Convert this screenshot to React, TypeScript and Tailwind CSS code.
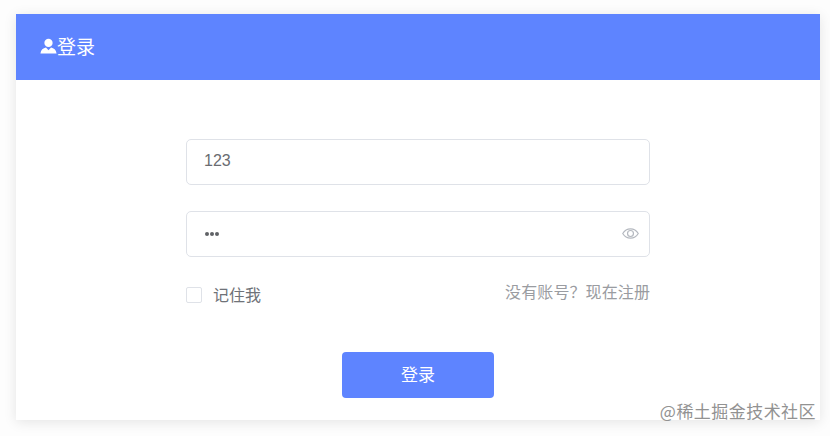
import React from 'react';

const font = { fontFamily: '"Noto Sans CJK SC", "Liberation Sans", sans-serif' };

function UserIcon() {
    return (
        <svg width="17" height="17" viewBox="0 0 16 16" fill="#ffffff">
            <circle cx="8" cy="4.6" r="3.9"/>
            <path d="M0.4 14.6 C0.8 11.2 3 9.6 5.6 9 L8 11.6 L10.4 9 C13 9.6 15.2 11.2 15.6 14.6 Z"/>
        </svg>
    );
}

function EyeIcon() {
    return (
        <svg className="mb-[2px]" width="17" height="17" viewBox="0 0 16 16" fill="none" stroke="#b4b8bf" strokeWidth="1.1">
            <path d="M0.7 8 C2.5 5 5 3.6 8 3.6 C11 3.6 13.5 5 15.3 8 C13.5 11 11 12.4 8 12.4 C5 12.4 2.5 11 0.7 8 Z"/>
            <circle cx="8" cy="8" r="2.8"/>
        </svg>
    );
}

export default function App() {
    return (
        <div className="w-[830px] h-[436px] bg-[#fdfdfd] pt-[14px] pl-4 relative overflow-hidden" style={font}>
            <div className="w-[804px] h-[406px] bg-white shadow-[0_2px_12px_rgba(0,0,0,0.1)]">
                <div className="h-[66px] bg-[#5e84ff] flex items-center pl-6 pb-[2px] text-white text-[19px]">
                    <UserIcon/>
                    <span>登录</span>
                </div>
                <div className="w-[464px] ml-[170px] pt-[59px]">
                    <div className="h-[46px] border border-[#dfe2e8] rounded-[5px] flex items-center pl-[17px] pb-[2px] text-[16px] text-[#6a6c71]">
                        <span style={{fontFamily: '"Liberation Sans", sans-serif'}}>123</span>
                    </div>
                    <div className="h-[46px] mt-[26px] border border-[#dfe2e8] rounded-[5px] flex items-center justify-between pl-[18px] pr-[10px]">
                        <div className="flex gap-[1px]">
                            <span className="w-1 h-1 rounded-full bg-[#606266]"></span>
                            <span className="w-1 h-1 rounded-full bg-[#606266]"></span>
                            <span className="w-1 h-1 rounded-full bg-[#606266]"></span>
                        </div>
                        <EyeIcon/>
                    </div>
                    <div className="flex justify-between items-start mt-[24px]">
                        <label className="flex items-center gap-[11px] text-[16px] leading-[26px] text-[#6f7278]">
                            <span className="w-4 h-4 mt-[2px] border border-[#dfe2e8] rounded-[2px] bg-white"></span>
                            记住我
                        </label>
                        <span className="text-[16px] leading-[20px] tracking-[0.1px] text-[#9a9ca1]">没有账号？现在注册</span>
                    </div>
                    <button className="block w-[152px] h-[46px] mx-auto mt-[45px] pb-[2px] bg-[#5e84ff] rounded-[4px] text-white text-[17px]">登录</button>
                </div>
            </div>
            <div className="absolute right-[14px] bottom-[14px] text-[17px] leading-[22px] tracking-[0.45px] text-[#929292]">@稀土掘金技术社区</div>
        </div>
    );
}
